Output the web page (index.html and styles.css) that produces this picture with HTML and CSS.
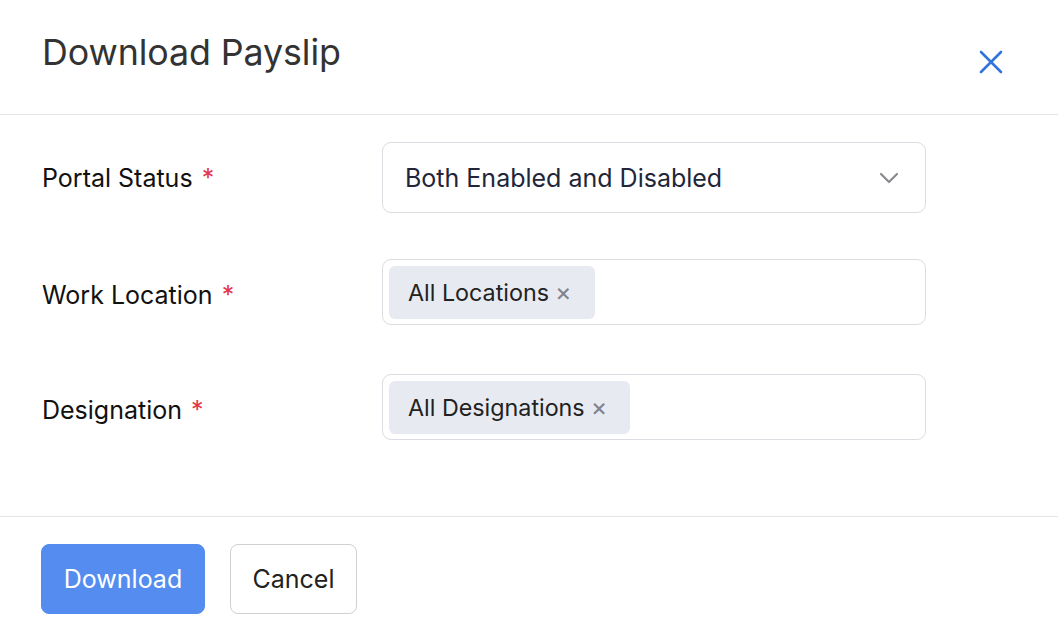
FILE: index.html
```html
<!DOCTYPE html>
<html>
<head>
<meta charset="utf-8">
<link rel="stylesheet" href="styles.css">
</head>
<body>
<div class="modal">
  <div class="header">
    <h1 class="title">Download Payslip</h1>
    <button class="close" aria-label="Close">
      <svg width="24" height="24" viewBox="0 0 24 24"><path d="M2 2 L22 22 M22 2 L2 22" stroke="#3273dc" stroke-width="2.6" stroke-linecap="round" fill="none"/></svg>
    </button>
  </div>
  <div class="body">
    <div class="row">
      <label class="label">Portal Status <span class="req">*</span></label>
      <div class="select">
        <span class="select-text">Both Enabled and Disabled</span>
        <svg class="chev" width="20" height="12" viewBox="0 0 20 12"><path d="M2 2 L10 10 L18 2" stroke="#8a8a8e" stroke-width="2.2" fill="none" stroke-linecap="round" stroke-linejoin="round"/></svg>
      </div>
    </div>
    <div class="row row2">
      <label class="label">Work Location <span class="req">*</span></label>
      <div class="multi">
        <span class="chip">All Locations <span class="chip-x">×</span></span>
      </div>
    </div>
    <div class="row row3">
      <label class="label">Designation <span class="req">*</span></label>
      <div class="multi">
        <span class="chip">All Designations <span class="chip-x">×</span></span>
      </div>
    </div>
  </div>
  <div class="footer">
    <button class="btn primary">Download</button>
    <button class="btn secondary">Cancel</button>
  </div>
</div>
</body>
</html>
```
FILE: styles.css
```css
* { box-sizing: border-box; }
html, body { margin: 0; padding: 0; background: #fff; }
body { font-family: Inter, "Noto Sans", sans-serif; color: #111; }
.modal { width: 1058px; height: 636px; }
.header {
  height: 115px;
  border-bottom: 1px solid #e4e4ea;
  display: flex;
  align-items: flex-start;
  justify-content: space-between;
  padding: 0 55px 0 42px;
}
.title {
  margin: 0;
  margin-top: 30px;
  font-size: 35.8px;
  font-weight: 400;
  color: #333;
  line-height: 44px;
  letter-spacing: -0.1px;
}
.close {
  margin-top: 50px;
  border: none;
  background: none;
  padding: 0;
  width: 24px;
  height: 24px;
  cursor: pointer;
}
.body { padding: 27px 132px 0 42px; height: 402px; border-bottom: 1px solid #e4e4ea; }
.row {
  display: grid;
  grid-template-columns: 340px 544px;
  align-items: start;
}
.row2 { margin-top: 46px; }
.row3 { margin-top: 49px; }
.label { font-size: 25px; line-height: 30px; padding-top: 21px; color: #111; }
.req { color: #e5354a; margin-left: 2px; }
.select {
  height: 71px;
  border: 1px solid #dcdce2;
  border-radius: 9px;
  display: flex;
  align-items: center;
  justify-content: space-between;
  padding: 0 26px 0 22px;
}
.select-text { font-size: 25px; color: #21263a; }
.multi {
  height: 66px;
  border: 1px solid #dcdce2;
  border-radius: 9px;
  padding: 6px;
  display: flex;
  align-items: center;
}
.chip {
  background: #e8eaf1;
  border-radius: 6px;
  height: 53px;
  display: inline-flex;
  align-items: center;
  padding: 0 23px 0 19px;
  font-size: 23.3px;
  color: #222;
}
.chip-x { color: #80838f; margin-left: 6px; font-size: 25px; }
.footer { padding: 27px 41px; display: flex; gap: 25px; }
.btn {
  height: 70px;
  border-radius: 8px;
  font-family: Inter, "Noto Sans", sans-serif;
  font-size: 25px;
  padding: 0;
  cursor: pointer;
}
.primary { background: #548cf0; color: #fff; border: 1px solid #548cf0; width: 164px; }
.secondary { background: #fff; color: #222; border: 1px solid #cfcfd4; width: 127px; }
```
